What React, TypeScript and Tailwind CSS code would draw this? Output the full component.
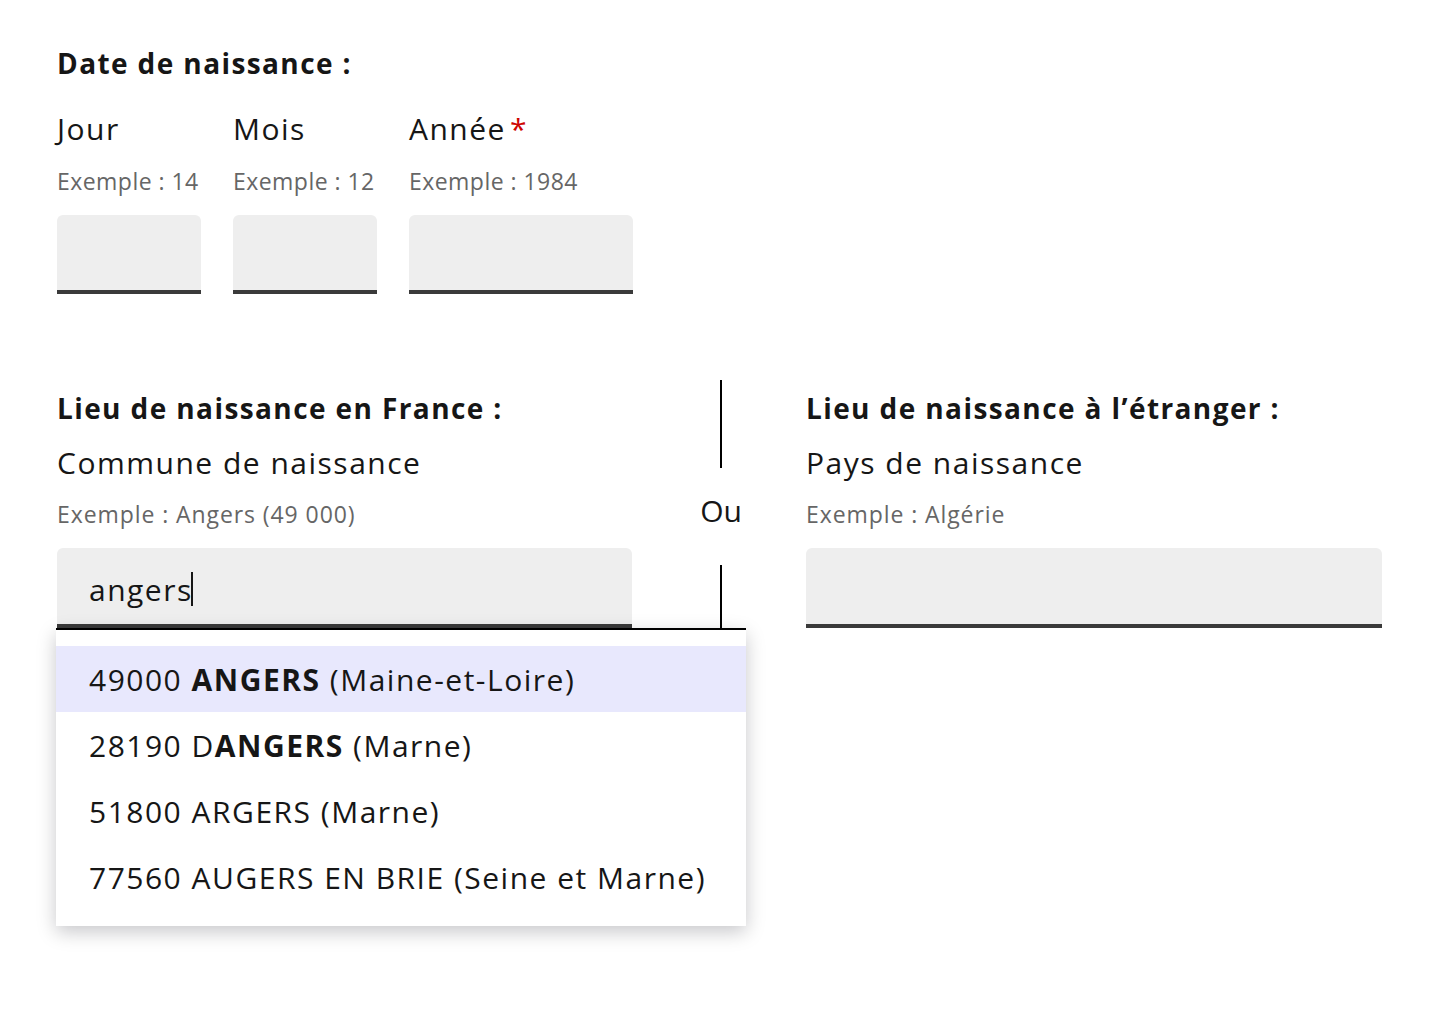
import React from "react"

const dateFields = [
  { label: "Jour", hint: "Exemple : 14", width: "w-[144px]", required: false },
  { label: "Mois", hint: "Exemple : 12", width: "w-[144px]", required: false },
  { label: "Année", hint: "Exemple : 1984", width: "w-[224px]", required: true },
]

const suggestions = [
  { code: "49000", before: "", bold: "ANGERS", dept: "(Maine-et-Loire)" },
  { code: "28190", before: "D", bold: "ANGERS", dept: "(Marne)" },
  { code: "51800", before: "ARGERS", bold: "", dept: "(Marne)" },
  { code: "77560", before: "AUGERS EN BRIE", bold: "", dept: "(Seine et Marne)" },
]

const Field = ({
  label,
  hint,
  children,
}: {
  label: string
  hint: string
  children: React.ReactNode
}) => (
  <div className="flex flex-col">
    <div className="mt-[17px] text-[30px] leading-[40px] tracking-[0.05em] text-[#161616]">{label}</div>
    <div className="mt-[15px] text-[23px] leading-[32px] tracking-[0.04em] text-[#666666]">{hint}</div>
    <div className="mt-[18px]">{children}</div>
  </div>
)

export default function App() {
  return (
    <div className="min-h-screen bg-white pl-[57px] pt-[45px] font-['Open_Sans',sans-serif] text-[#161616]">
      <div className="text-[28px] font-bold leading-[36px] tracking-[0.05em]">Date de naissance :</div>

      <div className="mt-[28px] flex gap-8">
        {dateFields.map(field => (
          <div key={field.label} className={`flex ${field.width} flex-col whitespace-nowrap`}>
            <div className="text-[30px] leading-[40px] tracking-[0.05em]">
              {field.label}
              {field.required && <span className="ml-1 text-[#ce0500]">*</span>}
            </div>
            <div className="mt-[16px] text-[23px] leading-[32px] tracking-[0.02em] text-[#666666]">
              {field.hint}
            </div>
            <div className="mt-[18px] h-[79px] w-full rounded-t-[6px] border-b-4 border-[#3a3a3a] bg-[#eeeeee]" />
          </div>
        ))}
      </div>

      <div className="mt-[86px] grid grid-cols-[575px_174px_576px]">
        <div className="flex flex-col pt-[10px]">
          <div className="text-[28px] font-bold leading-[36px] tracking-[0.05em]">
            Lieu de naissance en France :
          </div>
          <Field label="Commune de naissance" hint="Exemple : Angers (49 000)">
            <div className="relative">
              <div className="flex h-[80px] items-center rounded-t-[6px] border-b-4 border-[#3a3a3a] bg-[#eeeeee] pl-[32px] pt-[6px] text-[30px] tracking-[0.05em]">
                <span>angers</span>
                <span className="-ml-[2px] h-[34px] w-[2px] bg-[#161616]" />
              </div>
              <div className="absolute left-[-1px] top-full z-10 w-[690px] border-t-2 border-black bg-white py-4 shadow-[0_6px_18px_rgba(0,0,18,0.22)]">
                {suggestions.map((s, i) => (
                  <div
                    key={s.code}
                    className={`flex h-[66px] items-center px-[33px] text-[30px] tracking-[0.05em] ${i === 0 ? "bg-[#e8e8fd]" : ""}`}
                  >
                    <span className="whitespace-pre">
                      {s.code} {s.before}
                      {s.bold && <b className="font-bold">{s.bold}</b>} {s.dept}
                    </span>
                  </div>
                ))}
              </div>
            </div>
          </Field>
        </div>

        <div className="flex flex-col items-center pl-[4px]">
          <div className="h-[88px] w-[2px] bg-black" />
          <div className="flex flex-1 items-center pb-[12px] text-[30px] leading-none">Ou</div>
          <div className="h-[63px] w-[2px] bg-black" />
        </div>

        <div className="flex flex-col pt-[10px]">
          <div className="text-[28px] font-bold leading-[36px] tracking-[0.05em]">
            Lieu de naissance à l’étranger :
          </div>
          <Field label="Pays de naissance" hint="Exemple : Algérie">
            <div className="h-[80px] rounded-t-[6px] border-b-4 border-[#3a3a3a] bg-[#eeeeee]" />
          </Field>
        </div>
      </div>
    </div>
  )
}
